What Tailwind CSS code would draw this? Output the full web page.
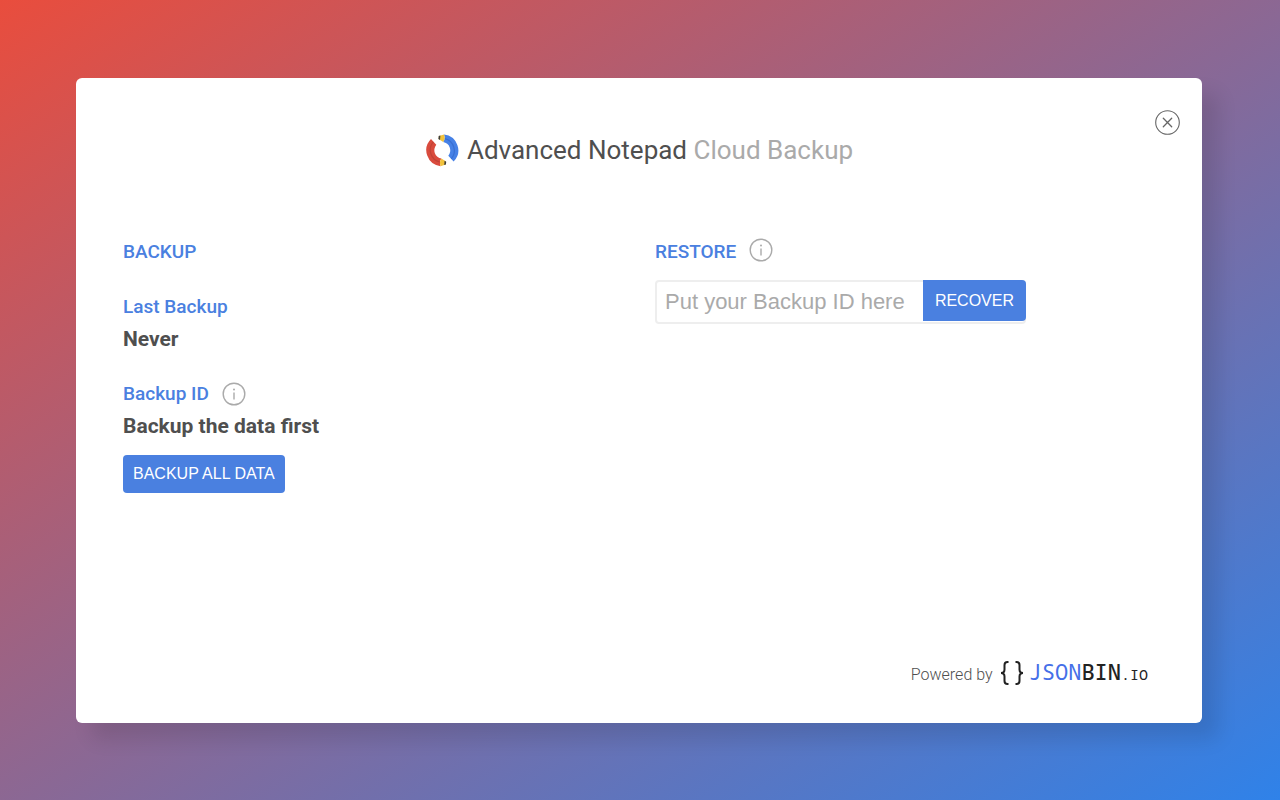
<!DOCTYPE html>
<html lang="en">
<head>
    <meta charset="UTF-8">
    <meta name="viewport" content="width=device-width, initial-scale=1.0">
    <title>Advanced Notepad Cloud Backup</title>
    <script src="https://cdn.jsdelivr.net/npm/@tailwindcss/browser@4"></script>
</head>
<body class="flex min-h-screen bg-linear-to-br/srgb from-[#e94d3d] to-[#2f82e9] pt-[78px] pr-[78px] pb-[77px] pl-[76px] font-['Roboto',sans-serif] text-[#4f4f4f]">
    <main class="relative flex flex-1 flex-col rounded-md bg-white px-[47px] pt-[52px] pb-8 shadow-[16px_16px_20px_rgba(0,0,0,0.11)]">
        <button type="button" aria-label="Close" class="absolute top-8 right-[22px] cursor-pointer">
            <svg class="size-[25px]" viewBox="0 0 25 25" fill="none" stroke="#666" stroke-linecap="round">
                <circle cx="12.5" cy="12.5" r="11.8" stroke-width="1.1"/>
                <path d="M8.3 8.3l8.4 8.4M16.7 8.3l-8.4 8.4" stroke-width="1.3"/>
            </svg>
        </button>

        <header class="flex items-center justify-center gap-2">
            <svg class="size-[34px]" viewBox="0 0 34 34">
                <!-- red pencil -->
                <path d="M6 6A16 16 0 0 0 15.6 33.2Q14 29 16.4 25.6A8.500 8.500 0 0 1 11.300 11.800Z" fill="#d94b3d"/>
                <path d="M8.3 8.8A12.400 12.400 0 0 0 14.800 29" fill="none" stroke="#c04337" stroke-width="1.2"/>
                <path d="M16.4 25.600L21 28.600 20.700 31.600 15.600 33.200Q14 29 16.400 25.600Z" fill="#f2c33c"/>
                <path d="M19.600 27.700L21.200 28.700 20.900 31.500 19.200 32Z" fill="#3c3c3c"/>
                <!-- blue pencil -->
                <path d="M28.600 28.600A16 16 0 0 0 19 1.400Q20.600 5.600 18.200 9A8.500 8.500 0 0 1 23.300 22.800Z" fill="#4681e6"/>
                <path d="M26.300 25.800A12.400 12.400 0 0 0 19.800 5.600" fill="none" stroke="#386fd3" stroke-width="1.2"/>
                <path d="M18.200 9L13.600 6 13.900 3 19 1.400Q20.600 5.600 18.200 9Z" fill="#f2c33c"/>
                <path d="M15 6.900L13.400 5.900 13.700 3.100 15.400 2.600Z" fill="#3c3c3c"/>
            </svg>
            <h1 class="text-[26px] leading-10">Advanced Notepad <span class="text-[#aaa]">Cloud Backup</span></h1>
        </header>

        <div class="mt-[67px] grid grid-cols-2 gap-x-8">
            <section>
                <h2 class="text-[19px] leading-[30px] font-medium text-[#4a80e0]">BACKUP</h2>
                <h3 class="mt-[25px] text-[19px] leading-[30px] font-medium text-[#4a80e0]">Last Backup</h3>
                <p class="text-[21px] leading-[34px] font-bold">Never</p>
                <div class="mt-[23px] flex items-center gap-[13px]">
                    <h3 class="text-[19px] leading-[30px] font-medium text-[#4a80e0]">Backup ID</h3>
                    <button type="button" aria-label="About the Backup ID" class="cursor-pointer">
                        <svg class="size-6" viewBox="0 0 24 24" fill="none" stroke="#aaa">
                            <circle cx="12" cy="12" r="10.8" stroke-width="1.4"/>
                            <path d="M12 10.5v7" stroke-width="1.4"/>
                            <circle cx="12" cy="7.4" r="1" fill="#aaa" stroke="none"/>
                        </svg>
                    </button>
                </div>
                <p class="text-[21px] leading-[34px] font-bold">Backup the data first</p>
                <button type="button" class="mt-3 h-[38px] cursor-pointer rounded bg-[#4a80e0] px-[10px] font-['Liberation_Sans',sans-serif] text-base text-white">BACKUP ALL DATA</button>
            </section>

            <section>
                <div class="flex items-center gap-[13px]">
                    <h2 class="text-[19px] leading-[30px] font-medium text-[#4a80e0]"><label for="backup-id">RESTORE</label></h2>
                    <button type="button" aria-label="About restoring" class="-mt-1 cursor-pointer">
                        <svg class="size-6" viewBox="0 0 24 24" fill="none" stroke="#aaa">
                            <circle cx="12" cy="12" r="10.8" stroke-width="1.4"/>
                            <path d="M12 10.5v7" stroke-width="1.4"/>
                            <circle cx="12" cy="7.4" r="1" fill="#aaa" stroke="none"/>
                        </svg>
                    </button>
                </div>
                <form class="mt-[13px] flex w-[371px] max-w-full items-start rounded border-2 border-[#eee] font-['Liberation_Sans',sans-serif]">
                    <input id="backup-id" type="text" placeholder="Put your Backup ID here" class="h-10 min-w-0 flex-1 px-2 text-[22px] outline-none placeholder:text-[#aaa]">
                    <button type="button" class="-mt-0.5 -mr-0.5 h-[41px] cursor-pointer rounded-r bg-[#4a80e0] px-3 text-base text-white">RECOVER</button>
                </form>
            </section>
        </div>

        <footer class="mt-auto flex items-baseline justify-end gap-1.5 pr-[7px]">
            <span class="text-base font-light">Powered by</span>
            <a href="#" class="flex items-baseline font-['Noto_Sans_Mono','DejaVu_Sans_Mono',monospace] text-[22px] leading-[34px] text-[#222]">
                <svg class="mr-1 h-[26px] w-[26px] self-center" viewBox="0 0 26 26" fill="none" stroke="#222" stroke-width="2">
                    <path d="M9.5 2H8.5Q5.5 2 5.5 5V9.5Q5.5 13 2 13Q5.5 13 5.5 16.5V21Q5.5 24 8.5 24H9.5"/>
                    <path d="M16.5 2H17.5Q20.5 2 20.5 5V9.5Q20.5 13 24 13Q20.5 13 20.5 16.5V21Q20.5 24 17.5 24H16.5"/>
                </svg>
                <span class="text-[#456fe8]">JSON</span><span class="font-medium">BIN</span><span class="text-[15px]">.IO</span>
            </a>
        </footer>
    </main>
</body>
</html>
